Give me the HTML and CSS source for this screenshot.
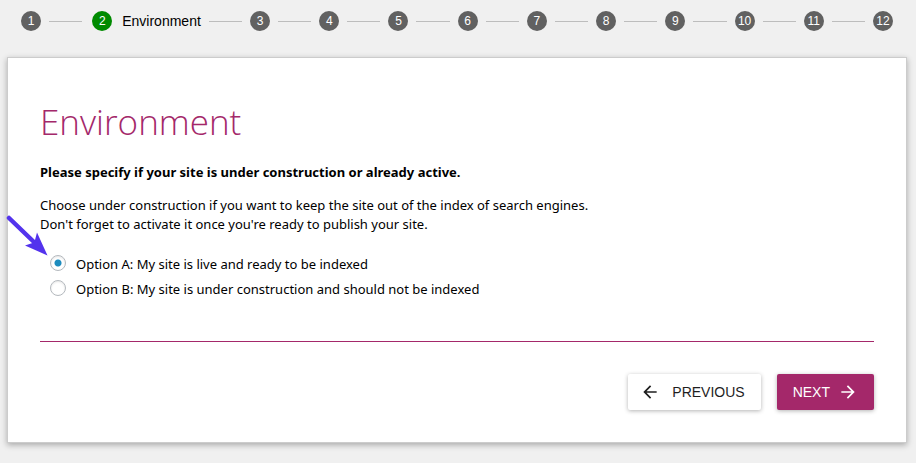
FILE: index.html
```html
<!DOCTYPE html>
<html lang="en">
<head>
<meta charset="utf-8">
<title>Environment</title>
<link rel="stylesheet" href="styles.css">
</head>
<body>
<ol class="stepper">
  <li class="step"><span class="badge">1</span></li>
  <li class="step current" aria-current="step"><span class="badge">2</span><span class="step-name">Environment</span></li>
  <li class="step"><span class="badge">3</span></li>
  <li class="step"><span class="badge">4</span></li>
  <li class="step"><span class="badge">5</span></li>
  <li class="step"><span class="badge">6</span></li>
  <li class="step"><span class="badge">7</span></li>
  <li class="step"><span class="badge">8</span></li>
  <li class="step"><span class="badge">9</span></li>
  <li class="step"><span class="badge">10</span></li>
  <li class="step"><span class="badge">11</span></li>
  <li class="step"><span class="badge">12</span></li>
</ol>
<main class="card">
  <h1>Environment</h1>
  <form>
    <p class="question" id="question">Please specify if your site is under construction or already active.</p>
    <p class="help">Choose under construction if you want to keep the site out of the index of search engines.<br>Don't forget to activate it once you're ready to publish your site.</p>
    <div class="options" role="radiogroup" aria-labelledby="question">
      <svg class="pointer" width="42" height="42" viewBox="0 0 42 42" aria-hidden="true">
        <path d="M3 4L29 29" stroke="#5333ed" stroke-width="4.5" stroke-linecap="round"/>
        <path d="M41.500 41.500L31 18.500L29 26L26.500 29L19 31.500Z" fill="#5333ed"/>
      </svg>
      <div class="option"><input type="radio" name="env" id="live" checked><label for="live">Option A: My site is live and ready to be indexed</label></div>
      <div class="option"><input type="radio" name="env" id="construction"><label for="construction">Option B: My site is under construction and should not be indexed</label></div>
    </div>
    <div class="actions">
      <button type="button" class="previous"><svg width="20" height="20" viewBox="0 0 24 24" aria-hidden="true"><path d="M20 11H7.83l5.59-5.59L12 4l-8 8 8 8 1.41-1.41L7.83 13H20v-2z"/></svg>PREVIOUS</button>
      <button type="button" class="next">NEXT<svg width="20" height="20" viewBox="0 0 24 24" aria-hidden="true"><path d="M4 11h12.170l-5.590-5.590L12 4l8 8-8 8-1.410-1.410L16.170 13H4z"/></svg></button>
    </div>
  </form>
</main>
</body>
</html>
```
FILE: styles.css
```css
* {
  box-sizing: border-box;
}

body {
  margin: 0;
  padding: 11px 10px 20px 8px;
  background: #f0f0f0;
  color: #000;
  font: 13px/19px "Noto Sans", sans-serif;
}

.stepper {
  display: flex;
  align-items: center;
  margin: 0 0 27px;
  padding: 0 13px;
  list-style: none;
  font: 14px/20px "Liberation Sans", sans-serif;
}

.step {
  display: flex;
  align-items: center;
  flex: 1 1 auto;
}

.step:last-child {
  flex: none;
}

.step:not(:last-child)::after {
  content: "";
  flex: 1;
  height: 1px;
  margin: 0 8px;
  background: #bdbdbd;
}

.badge {
  width: 20px;
  height: 20px;
  border-radius: 50%;
  background: #616161;
  color: #fff;
  font-size: 12px;
  text-align: center;
}

.current .badge {
  margin-left: 2px;
  background: #008a00;
}

.step-name {
  margin-left: 10px;
}

.card {
  padding: 40px 32px 32px;
  background: #fff;
  box-shadow: 0 0 0 1px #ccc, 0 2px 6px 1px rgba(0, 0, 0, 0.3);
}

h1 {
  margin: 0 0 17px;
  color: #a4286a;
  font: 300 35px/48px "Open Sans", sans-serif;
}

.question {
  margin: 0 0 14px;
  font-weight: 700;
}

.help {
  margin: 0 0 21px;
}

.options {
  position: relative;
  display: grid;
  gap: 6px;
  padding: 0 10px 42px;
}

.option {
  display: flex;
  align-items: flex-start;
  gap: 10px;
}

.option input {
  appearance: none;
  width: 16px;
  height: 16px;
  margin: 0;
  border: 1px solid #b4b9be;
  border-radius: 50%;
  background: #fff;
  box-shadow: inset 0 1px 2px rgba(0, 0, 0, 0.1);
}

.option input:checked {
  background: radial-gradient(circle, #1e8cbe 0 3px, #fff 4px);
}

.pointer {
  position: absolute;
  left: -34px;
  top: -41px;
}

.actions {
  display: flex;
  justify-content: flex-end;
  gap: 16px;
  padding-top: 32px;
  border-top: 1px solid #a4286a;
}

button {
  display: flex;
  align-items: center;
  height: 36px;
  padding: 0 16px;
  border: 0;
  border-radius: 2px;
  box-shadow: 0 1px 4px rgba(0, 0, 0, 0.3);
  font: 14px/20px "Liberation Sans", sans-serif;
}

button svg {
  fill: currentColor;
}

.previous {
  gap: 12px;
  padding-left: 12px;
  background: #fff;
  color: #1e1e1e;
}

.next {
  gap: 8px;
  background: #a4286a;
  color: #fff;
}
```
